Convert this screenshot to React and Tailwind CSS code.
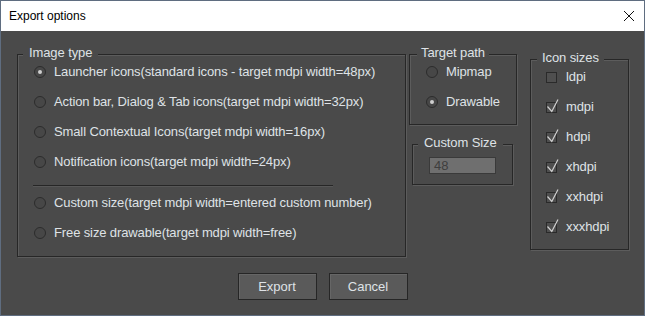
import React from "react";

const font = { fontFamily: '"Liberation Sans", Arial, sans-serif' };

function Group({ label, legendLeft, className, children }) {
  return (
    <div
      className={`relative border border-[#272727] shadow-[1px_1px_0_#5c5c5c,inset_1px_1px_0_#5c5c5c] ${className}`}
    >
      <span
        className={`absolute top-[-10px] ${legendLeft} bg-[#4a4a4a] text-[13px] leading-[16px] tracking-[-0.1px] text-[#dfe2e6] whitespace-nowrap`}
      >
        {label}
      </span>
      {children}
    </div>
  );
}

function Radio({ label, checked }) {
  return (
    <div className="flex h-[30px] items-center">
      <span className="ml-[16px] flex h-[12px] w-[12px] items-center justify-center rounded-full border border-[#2c2c2c] bg-[#474747]">
        {checked && <span className="h-[4px] w-[4px] rounded-full bg-[#cfcfcf]" />}
      </span>
      <span className="ml-[8px] text-[13px] leading-[16px] tracking-[-0.12px] text-[#dfe2e6] whitespace-nowrap">
        {label}
      </span>
    </div>
  );
}

function Check({ label, checked }) {
  return (
    <div className="flex h-[30px] items-center">
      <span className="relative ml-[15px] h-[11px] w-[11px] border border-[#2a2a2a] bg-[#4f4f4f]">
        {checked && (
          <svg
            className="absolute left-[-1px] top-[-5px]"
            width="14"
            height="16"
            viewBox="0 0 14 16"
          >
            <polyline
              points="1.5,8.5 5.8,13.5 12,1.5"
              fill="none"
              stroke="#d0d0d0"
              strokeWidth="1.2"
            />
          </svg>
        )}
      </span>
      <span className="ml-[9px] text-[13px] leading-[16px] tracking-[-0.1px] text-[#dfe2e6]">{label}</span>
    </div>
  );
}

export default function App() {
  return (
    <div
      className="flex h-[316px] w-[645px] flex-col border border-[#5f6d80] bg-[#4a4a4a]"
      style={font}
    >
      <div className="flex h-[30px] items-center justify-between bg-white pl-[8px] pr-[9px]">
        <span className="text-[12px] leading-[14px] text-black">Export options</span>
        <svg width="12" height="12" viewBox="0 0 12 12">
          <path d="M1 1 L11 11 M11 1 L1 11" stroke="#111" strokeWidth="1" />
        </svg>
      </div>
      <div className="flex flex-1 flex-col">
        <div className="ml-[16px] mt-[23px] flex items-start">
          <Group label="Image type" legendLeft="left-[5px] px-[6px]" className="h-[203px] w-[389px]">
            <div className="pt-[2px]">
              <Radio checked label="Launcher icons(standard icons - target mdpi width=48px)" />
              <Radio label="Action bar, Dialog & Tab icons(target mdpi width=32px)" />
              <Radio label="Small Contextual Icons(target mdpi width=16px)" />
              <Radio label="Notification icons(target mdpi width=24px)" />
              <div className="ml-[15px] mt-[8px] h-[2px] w-[300px] border-t border-[#262626] border-b-[#575757] border-b" />
              <div className="mt-[1px]">
                <Radio label="Custom size(target mdpi width=entered custom number)" />
                <Radio label="Free size drawable(target mdpi width=free)" />
              </div>
            </div>
          </Group>
          <div className="ml-[3px] flex w-[108px] flex-col">
            <Group label="Target path" legendLeft="left-[7px] px-[4px]" className="h-[71px] w-[108px]">
              <div className="pt-[2px]">
                <Radio label="Mipmap" />
                <Radio checked label="Drawable" />
              </div>
            </Group>
            <Group label="Custom Size" legendLeft="left-[5px] px-[6px]" className="ml-[3px] mt-[19px] h-[41px] w-[101px]">
              <div className="ml-[16px] mt-[12px] flex h-[17px] w-[67px] items-center border border-[#3a3a3a] bg-[#6f6f6f] pl-[4px] text-[13px] leading-[15px] text-[#3e3e3e]">
                48
              </div>
            </Group>
          </div>
          <Group label="Icon sizes" legendLeft="left-[6px] px-[5px]" className="ml-[13px] mt-[5px] h-[191px] w-[99px]">
            <div className="pt-[2px]">
              <Check label="ldpi" />
              <Check checked label="mdpi" />
              <Check checked label="hdpi" />
              <Check checked label="xhdpi" />
              <Check checked label="xxhdpi" />
              <Check checked label="xxxhdpi" />
            </div>
          </Group>
        </div>
        <div className="mt-[16px] flex justify-center gap-[12px]">
          <button className="h-[27px] w-[79px] border border-[#262626] bg-[#5a5a5a] text-[13px] text-[#dfe2e6] shadow-[inset_1px_1px_0_#666]">
            Export
          </button>
          <button className="h-[27px] w-[79px] border border-[#262626] bg-[#5a5a5a] text-[13px] text-[#dfe2e6] shadow-[inset_1px_1px_0_#666]">
            Cancel
          </button>
        </div>
      </div>
    </div>
  );
}
